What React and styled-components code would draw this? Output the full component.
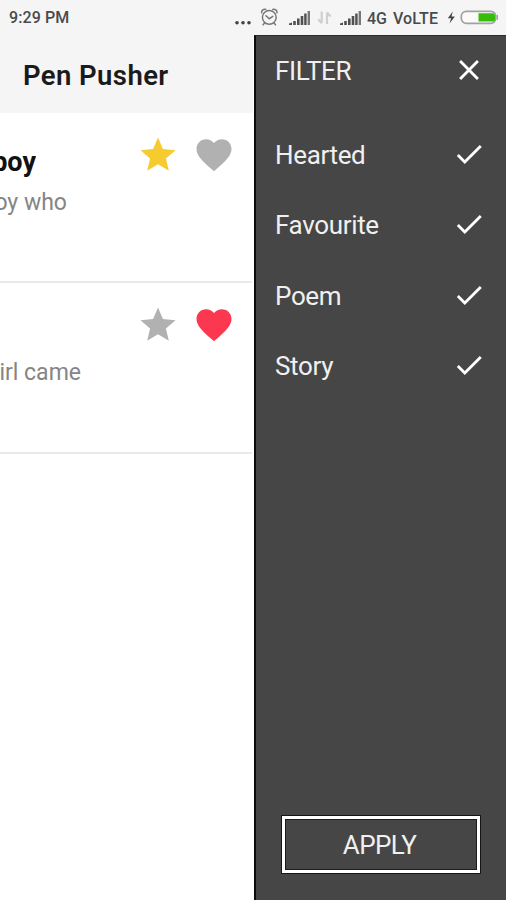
import React, {Component} from 'react'

import styled, {createGlobalStyle} from 'styled-components';

const GlobalStyle = createGlobalStyle`
    body {
        margin: 0;
        background: #fff;
        font-family: Roboto, "Liberation Sans", sans-serif;
    }
`;

const Screen = styled.div`
    display: flex;
    flex-direction: column;
    width: 506px;
    height: 900px;
    overflow: hidden;
`;

const StatusBar = styled.header`
    display: flex;
    flex: none;
    justify-content: space-between;
    height: 35px;
    background: #f5f5f5;
    color: #4a4a4a;
`;

const StatusText = styled.span`
    padding: 8px 0 0 9px;
    font-size: 16px;
    line-height: 20px;
    font-weight: 500;
    letter-spacing: 0.1px;
`;

const StatusIcons = styled.svg`
    display: block;
    width: 281px;
    height: 35px;
`;

const Content = styled.div`
    display: flex;
    flex: 1;
`;

const Page = styled.main`
    width: 254px;
    overflow: hidden;
`;

const PageHeader = styled.div`
    height: 78px;
    width: 253px;
    background: #f5f5f5;
`;

const PageTitle = styled.h1`
    margin: 0;
    padding: 25px 0 0 23px;
    font-size: 27.5px;
    line-height: 32px;
    font-weight: 600;
    letter-spacing: 0.4px;
    color: #1b1b1b;
    white-space: nowrap;
`;

const Card = styled.article`
    display: flex;
    justify-content: space-between;
    box-sizing: border-box;
    width: 252px;
    height: ${props => props.$height}px;
    border-bottom: 2px solid #e9e9e9;
`;

const CardText = styled.div`
    padding-top: 32px;
    width: 100px;
`;

const Clip = styled.div`
    display: flex;
    justify-content: flex-end;
    overflow: hidden;
    white-space: nowrap;
    width: ${props => props.$width}px;
`;

const CardTitle = styled(Clip)`
    height: 34px;
    font-size: 27px;
    line-height: 34px;
    font-weight: 700;
    color: #111;
`;

const CardExcerpt = styled(Clip)`
    margin-top: 8px;
    font-size: 23px;
    line-height: 32px;
    color: #858585;
`;

const CardActions = styled.div`
    display: flex;
    gap: 14px;
    padding: 21px 17.5px 0 0;
`;

const ActionIcon = styled.svg`
    display: block;
    width: 42px;
    height: 42px;
    fill: ${props => props.$color};
`;

const Drawer = styled.aside`
    display: flex;
    flex-direction: column;
    box-sizing: border-box;
    width: 252px;
    border-left: 2px solid #0c0c0c;
    border-top: 1px solid #2c2c2c;
    background: #464646;
    color: #f0f0f0;
`;

const FilterRow = styled.div`
    display: flex;
    align-items: center;
    justify-content: space-between;
    height: ${props => props.$height || 70.3}px;
    padding: 0 20px 0 19px;
    font-size: 26px;
    letter-spacing: -0.35px;
`;

const FilterIcon = styled.svg`
    display: block;
    width: 34px;
    height: 34px;
    margin-bottom: 2px;
    fill: #fff;
`;

const FilterList = styled.div`
    flex: 1;
    padding-top: 15px;
`;

const ApplyButton = styled.button`
    width: 198px;
    height: 57px;
    margin: 0 0 27px 26px;
    padding: 0 3px 0 0;
    border: 3px solid #fff;
    outline: 1px solid #151515;
    box-shadow: inset 0 0 0 1px #1c1c1c;
    background: transparent;
    color: #f0f0f0;
    font-family: inherit;
    font-size: 26px;
    letter-spacing: -0.6px;
`;

const STAR = 'M12 17.27 18.18 21l-1.64-7.03L22 9.24l-7.19-.61L12 2 9.19 8.63 2 9.24l5.46 4.73L5.82 21z';
const HEART = 'M12 21.35l-1.45-1.32C5.4 15.36 2 12.28 2 8.5 2 5.42 4.42 3 7.5 3c1.74 0 3.41.81 4.5 2.09C13.09 3.81 14.76 3 16.5 3 19.58 3 22 5.42 22 8.5c0 3.78-3.4 6.86-8.55 11.54L12 21.35z';
const CHECK = 'M9 16.17 4.83 12l-1.42 1.41L9 19 21 7l-1.41-1.41z';
const CLOSE = 'M19 6.41 17.59 5 12 10.59 6.41 5 5 6.41 10.59 12 5 17.59 6.41 19 12 13.41 17.59 19 19 17.59 13.41 12z';

const stories = [
    {id: 1, title: 'boy', titleWidth: 36, excerpt: 'boy who', excerptWidth: 67, starred: true, hearted: false, height: 170},
    {id: 2, title: '', titleWidth: 0, excerpt: 'girl came', excerptWidth: 81, starred: false, hearted: true, height: 171},
];

const Signal = ({x}) => (
    <g transform={`translate(${x} 0)`} fill="#505050">
        <path d="M0 25v-1.5l3-1V25z" />
        <rect x="4.2" y="21" width="2.6" height="4" />
        <rect x="8" y="18.5" width="2.6" height="6.5" />
        <rect x="11.7" y="16" width="2.6" height="9" />
        <rect x="15.2" y="13.5" width="2.4" height="11.5" />
        <rect x="18.6" y="11" width="2.4" height="14" fill="#777" />
    </g>
);

const Status = () => (
    <StatusIcons viewBox="225 0 281 35">
        <g fill="#404040">
            <circle cx="237" cy="22.8" r="1.8" />
            <circle cx="243" cy="22.8" r="1.8" />
            <circle cx="249" cy="22.8" r="1.8" />
        </g>
        <g fill="none" stroke="#777" strokeWidth="1.5" strokeLinecap="round">
            <circle cx="269.3" cy="17.3" r="6.9" />
            <path d="M261.6 12.8a3.2 3.2 0 0 1 4.2-3.4M277 12.8a3.2 3.2 0 0 0-4.2-3.4M264.6 23l-1.5 1.8M274 23l1.5 1.8M266 15.7l3.3 3 3.5-2.3" />
        </g>
        <Signal x={289} />
        <g fill="none" stroke="#cfcfcf" strokeWidth="2.2">
            <path d="M321.7 11.5V23M318.3 19.2l3.4 4M327 24V12.5M330.5 16.5l-3.5-4" />
        </g>
        <Signal x={340} />
        <text x="367" y="23.8" fontSize="16" fontWeight="500" fill="#4a4a4a" textLength="20">4G</text>
        <text x="393" y="23.8" fontSize="16" fontWeight="500" fill="#4a4a4a" textLength="45">VoLTE</text>
        <path d="M452.8 11.5l-5 6.8h3.3l-1.6 5.2 5.4-7.1h-3.4z" fill="#444" />
        <rect x="461.3" y="11.3" width="34.5" height="12" rx="5" fill="#fbfbfb" stroke="#a2a2a2" strokeWidth="1.7" />
        <path d="M478.5 13.3h14.3a2.2 2.2 0 0 1 2.2 2.2v3.8a2.2 2.2 0 0 1-2.2 2.2h-14.3z" fill="#36bd0c" />
        <path d="M497.4 14.8v5" stroke="#a2a2a2" strokeWidth="1.3" />
    </StatusIcons>
);

const Icon = ({path, color}) => (
    <ActionIcon viewBox="0 0 24 24" $color={color}><path d={path} /></ActionIcon>
);

class App extends Component
{
    state = {
        filters: ['Hearted', 'Favourite', 'Poem', 'Story']
    }

    toggleFilter(name)
    {
        const {filters} = this.state;
        this.setState({
            filters: filters.includes(name) ? filters.filter(f => f !== name) : [...filters, name]
        })
    };

    render()
    {
        return(
            <Screen>
                <GlobalStyle />
                <StatusBar>
                    <StatusText>9:29 PM</StatusText>
                    <Status />
                </StatusBar>
                <Content>
                    <Page>
                        <PageHeader><PageTitle>Pen Pusher</PageTitle></PageHeader>
                        {stories.map(story => (
                            <Card key={story.id} $height={story.height}>
                                <CardText>
                                    <CardTitle $width={story.titleWidth}>{story.title}</CardTitle>
                                    <CardExcerpt $width={story.excerptWidth}>{story.excerpt}</CardExcerpt>
                                </CardText>
                                <CardActions>
                                    <Icon path={STAR} color={story.starred ? '#f5cb30' : '#b1b1b1'} />
                                    <Icon path={HEART} color={story.hearted ? '#fc3850' : '#b1b1b1'} />
                                </CardActions>
                            </Card>
                        ))}
                    </Page>
                    <Drawer>
                        <FilterRow $height={69}>
                            FILTER
                            <FilterIcon viewBox="0 0 24 24"><path d={CLOSE} /></FilterIcon>
                        </FilterRow>
                        <FilterList>
                            {['Hearted', 'Favourite', 'Poem', 'Story'].map(name => (
                                <FilterRow key={name} onClick={() => this.toggleFilter(name)}>
                                    {name}
                                    {this.state.filters.includes(name) && (
                                        <FilterIcon viewBox="0 0 24 24"><path d={CHECK} /></FilterIcon>
                                    )}
                                </FilterRow>
                            ))}
                        </FilterList>
                        <ApplyButton>APPLY</ApplyButton>
                    </Drawer>
                </Content>
            </Screen>
        )
    }
}

export default App
